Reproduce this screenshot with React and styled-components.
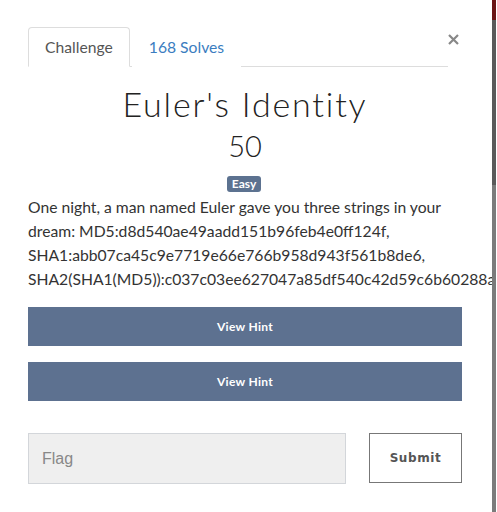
import React from 'react';
import styled, { createGlobalStyle } from 'styled-components';

const GlobalStyle = createGlobalStyle`
  html, body {
    margin: 0;
    padding: 0;
    background: #fff;
  }
  body {
    font-family: 'Lato', 'Open Sans', sans-serif;
    color: #333;
  }
`;

const Page = styled.div`
  display: flex;
  width: 497px;
  height: 512px;
  overflow: hidden;
`;

const Modal = styled.div`
  width: 492px;
  flex: none;
  padding: 27px 0 0 28px;
  overflow: hidden;
  box-sizing: border-box;
  background: #fff;
`;

const Edge = styled.div`
  width: 4px;
  flex: none;
  background: linear-gradient(
    to bottom,
    #6b1414 0,
    #6b1414 20px,
    #5a5a5a 20px,
    #5a5a5a 185px,
    #7b7b7b 185px
  );
`;

const Header = styled.div`
  display: flex;
  align-items: flex-start;
  width: 434px;
`;

const Tabs = styled.div`
  display: flex;
  width: 420px;
  border-bottom: 1px solid #ddd;
`;

const Tab = styled.div`
  height: 40px;
  box-sizing: border-box;
  padding: 0 16px;
  display: flex;
  align-items: center;
  font-size: 15.7px;
  margin-bottom: -1px;
  color: ${(p) => (p.active ? '#555' : '#3b7dc0')};
  background: #fff;
  border: 1px solid ${(p) => (p.active ? '#ddd' : 'transparent')};
  border-bottom-color: ${(p) => (p.active ? '#fff' : 'transparent')};
  border-radius: 4px 4px 0 0;
  margin-right: ${(p) => (p.active ? '2px' : '0')};
`;

const Close = styled.div`
  width: 14px;
  padding-top: 7px;
  display: flex;
  justify-content: center;
  margin-left: -2px;
`;

const Title = styled.h1`
  margin: 16px 0 0;
  width: 434px;
  text-align: center;
  font-family: 'Lato', sans-serif;
  font-weight: 300;
  font-size: 34px;
  letter-spacing: 1.8px;
  line-height: 42px;
  color: #222;
`;

const Points = styled.div`
  width: 434px;
  text-align: center;
  font-size: 29px;
  font-weight: 300;
  line-height: 36px;
  margin-top: 3px;
  color: #222;
`;

const BadgeRow = styled.div`
  width: 434px;
  display: flex;
  justify-content: center;
  margin-top: 12px;
`;

const Badge = styled.span`
  background: #5c7290;
  color: #fff;
  font-size: 12px;
  font-weight: 700;
  padding: 1px 5px;
  border-radius: 3px;
  line-height: 14px;
  margin-left: -2px;
`;

const Description = styled.p`
  margin: 3px 0 0;
  width: 434px;
  font-size: 15.7px;
  line-height: 24px;
  color: #333;
`;

const HintButton = styled.button`
  display: block;
  width: 434px;
  height: 39px;
  border: none;
  background: #5d7190;
  color: #fff;
  font-family: 'Lato', sans-serif;
  font-weight: 700;
  font-size: 12px;
  letter-spacing: 0.3px;
  margin-top: 16px;
  padding: 0;
`;

const FlagRow = styled.div`
  display: flex;
  justify-content: space-between;
  width: 434px;
  margin-top: 32px;
`;

const FlagInput = styled.input`
  width: 318px;
  height: 51px;
  box-sizing: border-box;
  background: #efefef;
  border: 1px solid #d3d6da;
  padding: 0 13px;
  font-family: 'Liberation Sans', Arial, sans-serif;
  font-size: 16px;
  color: #555;
  outline: none;
  &::placeholder {
    color: #888;
  }
`;

const SubmitButton = styled.button`
  width: 93px;
  height: 50px;
  background: #fff;
  border: 1px solid #777;
  color: #555;
  font-family: 'DejaVu Sans', Verdana, sans-serif;
  font-weight: 700;
  font-size: 12px;
  letter-spacing: 0.6px;
  padding: 0;
`;

export default function App() {
  return (
    <Page>
      <GlobalStyle />
      <Modal>
        <Header>
          <Tabs>
            <Tab active>Challenge</Tab>
            <Tab>168 Solves</Tab>
          </Tabs>
          <Close>
            <svg width="11" height="11" viewBox="0 0 11 11">
              <path d="M1 1 L10 10 M10 1 L1 10" stroke="#888" strokeWidth="2.2" />
            </svg>
          </Close>
        </Header>
        <Title>Euler's Identity</Title>
        <Points>50</Points>
        <BadgeRow>
          <Badge>Easy</Badge>
        </BadgeRow>
        <Description>
          One night, a man named Euler gave you three strings in your dream:
          MD5:d8d540ae49aadd151b96feb4e0ff124f,
          SHA1:abb07ca45c9e7719e66e766b958d943f561b8de6,
          SHA2(SHA1(MD5)):c037c03ee627047a85df540c42d59c6b60288a1e8b2a0e2b8c2f3f
        </Description>
        <HintButton>View Hint</HintButton>
        <HintButton>View Hint</HintButton>
        <FlagRow>
          <FlagInput placeholder="Flag" />
          <SubmitButton>Submit</SubmitButton>
        </FlagRow>
      </Modal>
      <Edge />
    </Page>
  );
}
